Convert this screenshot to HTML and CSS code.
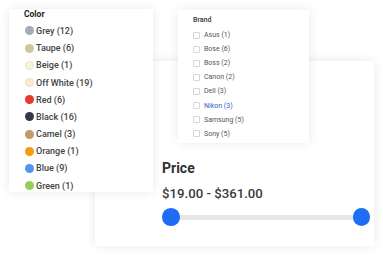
FILE: index.html
```html
<!DOCTYPE html>
<html>
<head>
<meta charset="utf-8">
<link rel="stylesheet" href="styles.css">
</head>
<body>
<div class="canvas">
  <section class="card price-card">
    <h2 class="price-title">Price</h2>
    <div class="price-range">$19.00 - $361.00</div>
    <div class="slider">
      <span class="thumb"></span>
      <span class="track"></span>
      <span class="thumb"></span>
    </div>
  </section>

  <section class="card color-card">
    <h3 class="color-title">Color</h3>
    <ul class="swatch-list">
      <li><span class="swatch grey"></span>Grey (12)</li>
      <li><span class="swatch taupe"></span>Taupe (6)</li>
      <li><span class="swatch beige"></span>Beige (1)</li>
      <li><span class="swatch offwhite"></span>Off White (19)</li>
      <li><span class="swatch red"></span>Red (6)</li>
      <li><span class="swatch black"></span>Black (16)</li>
      <li><span class="swatch camel"></span>Camel (3)</li>
      <li><span class="swatch orange"></span>Orange (1)</li>
      <li><span class="swatch blue"></span>Blue (9)</li>
      <li><span class="swatch green"></span>Green (1)</li>
    </ul>
  </section>

  <section class="card brand-card">
    <h3 class="brand-title">Brand</h3>
    <ul class="check-list">
      <li><span class="box"></span>Asus (1)</li>
      <li><span class="box"></span>Bose (6)</li>
      <li><span class="box"></span>Boss (2)</li>
      <li><span class="box"></span>Canon (2)</li>
      <li><span class="box"></span>Dell (3)</li>
      <li class="active"><span class="box"></span>Nikon (3)</li>
      <li><span class="box"></span>Samsung (5)</li>
      <li><span class="box"></span>Sony (5)</li>
    </ul>
  </section>
</div>
</body>
</html>
```

FILE: styles.css
```css
html, body {
  margin: 0;
  padding: 0;
  background: #ffffff;
}

body {
  font-family: Roboto, "Liberation Sans", sans-serif;
  color: #444;
}

.canvas {
  position: relative;
  width: 383px;
  height: 255px;
  overflow: hidden;
}

.card {
  position: absolute;
  background: #fff;
  box-shadow: 0 0 10px rgba(0, 0, 0, 0.09);
  box-sizing: border-box;
  overflow: hidden;
}

/* Price card */
.price-card {
  left: 95px;
  top: 61px;
  width: 279px;
  height: 185px;
  padding: 99px 4px 0 67px;
  display: flex;
  flex-direction: column;
}

.price-title {
  margin: 0;
  font-size: 14px;
  line-height: 16px;
  font-weight: 700;
  color: #333;
}

.price-range {
  margin-top: 10px;
  font-size: 13.2px;
  line-height: 16px;
  color: #3a3a3a;
  font-weight: 500;
}

.slider {
  margin-top: 6px;
  display: flex;
  align-items: center;
  height: 18px;
}

.thumb {
  flex: none;
  width: 17.5px;
  height: 17.5px;
  border-radius: 50%;
  background: #1f6cf5;
  position: relative;
  z-index: 1;
}

.track {
  flex: 1;
  height: 5px;
  margin: 0 -8px;
  background: #e7e7e7;
  border-radius: 3px;
}

/* Color card */
.color-card {
  left: 9px;
  top: 9px;
  width: 144px;
  height: 183px;
  padding: 0 0 0 15px;
}

.color-title {
  margin: 0;
  font-size: 8.5px;
  line-height: 10px;
  font-weight: 700;
  color: #222;
}

.swatch-list {
  list-style: none;
  margin: 3.4px 0 0;
  padding: 0;
}

.swatch-list li {
  display: flex;
  align-items: center;
  height: 17.2px;
  font-size: 9px;
  font-weight: 500;
  color: #444;
  padding-left: 1px;
}

.swatch {
  flex: none;
  width: 9px;
  height: 9px;
  border-radius: 50%;
  margin-right: 2px;
  box-sizing: border-box;
}

.grey { background: #a3abb7; }
.taupe { background: #cfc6a2; }
.beige { background: #f5f5dc; border: 1px solid #e6e6c8; }
.offwhite { background: #fbe9d3; border: 1px solid #f1dcc2; }
.red { background: #e8392f; }
.black { background: #343a44; }
.camel { background: #c29a6a; }
.orange { background: #f59b12; }
.blue { background: #5294ef; }
.green { background: #92cf55; }

/* Brand card */
.brand-card {
  left: 178px;
  top: 10px;
  width: 131px;
  height: 133px;
  padding: 6px 0 0 15px;
}

.brand-title {
  margin: 0;
  font-size: 7px;
  line-height: 8px;
  font-weight: 500;
  color: #333;
}

.check-list {
  list-style: none;
  margin: 4px 0 0;
  padding: 0;
}

.check-list li {
  display: flex;
  align-items: center;
  height: 14.1px;
  font-size: 7px;
  color: #555;
}

.check-list li.active {
  color: #2d63c8;
}

.box {
  flex: none;
  width: 7px;
  height: 7px;
  box-sizing: border-box;
  border: 1px solid #d6d6d6;
  border-radius: 1px;
  margin-right: 4px;
}
```
